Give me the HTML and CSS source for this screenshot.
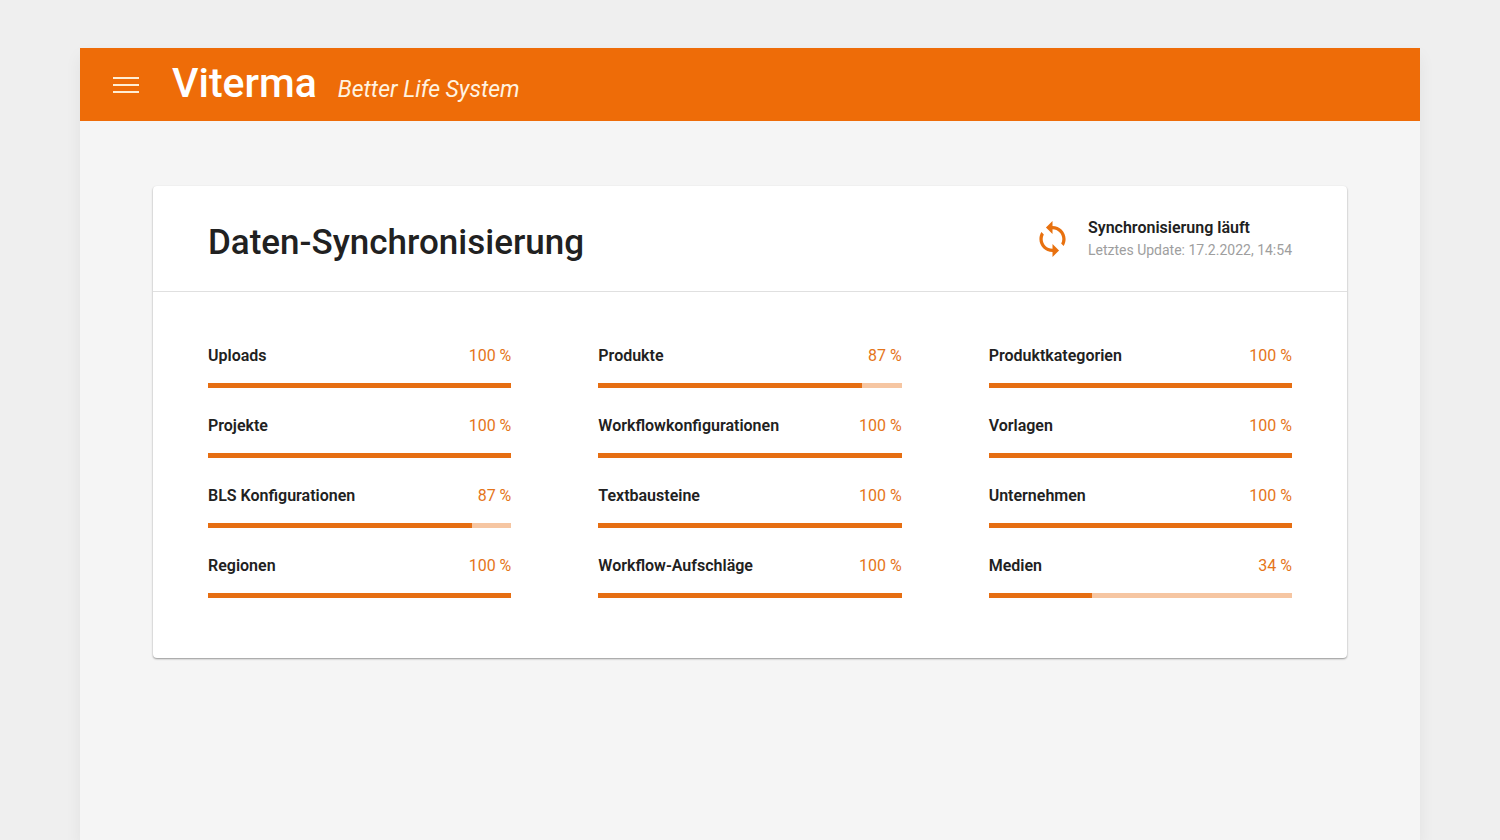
FILE: index.html
```
<!DOCTYPE html>
<html lang="de">
<head>
    <meta charset="UTF-8">
    <meta name="viewport" content="width=device-width, initial-scale=1.0">
    <title>Viterma - Daten-Synchronisierung</title>
    <link rel="stylesheet" href="styles.css">
</head>
<body>
    <div class="window">
        <header class="topbar">
            <button class="menu" type="button" aria-label="Menü">
                <span></span>
                <span></span>
                <span></span>
            </button>
            <div class="brand">Viterma</div>
            <div class="slogan">Better Life System</div>
        </header>

        <main class="content">
            <section class="card">
                <div class="card-head">
                    <h1>Daten-Synchronisierung</h1>
                    <div class="status">
                        <svg class="sync" viewBox="4 1 16 22" aria-hidden="true">
                            <path d="M12 4V1L8 5l4 4V6c3.31 0 6 2.69 6 6 0 1.01-.25 1.97-.7 2.8l1.46 1.46C19.54 15.03 20 13.57 20 12c0-4.42-3.58-8-8-8zm0 14c-3.31 0-6-2.69-6-6 0-1.01.25-1.97.7-2.8L5.24 7.74C4.46 8.97 4 10.43 4 12c0 4.42 3.58 8 8 8v3l4-4-4-4v3z"/>
                        </svg>
                        <div>
                            <div class="status-title">Synchronisierung läuft</div>
                            <div class="status-time">Letztes Update: 17.2.2022, 14:54</div>
                        </div>
                    </div>
                </div>

                <div class="items">
                    <div class="item">
                        <label for="uploads">Uploads</label><span>100 %</span>
                        <progress id="uploads" max="100" value="100"></progress>
                    </div>
                    <div class="item">
                        <label for="produkte">Produkte</label><span>87 %</span>
                        <progress id="produkte" max="100" value="87"></progress>
                    </div>
                    <div class="item">
                        <label for="kategorien">Produktkategorien</label><span>100 %</span>
                        <progress id="kategorien" max="100" value="100"></progress>
                    </div>
                    <div class="item">
                        <label for="projekte">Projekte</label><span>100 %</span>
                        <progress id="projekte" max="100" value="100"></progress>
                    </div>
                    <div class="item">
                        <label for="workflow">Workflowkonfigurationen</label><span>100 %</span>
                        <progress id="workflow" max="100" value="100"></progress>
                    </div>
                    <div class="item">
                        <label for="vorlagen">Vorlagen</label><span>100 %</span>
                        <progress id="vorlagen" max="100" value="100"></progress>
                    </div>
                    <div class="item">
                        <label for="bls">BLS Konfigurationen</label><span>87 %</span>
                        <progress id="bls" max="100" value="87"></progress>
                    </div>
                    <div class="item">
                        <label for="text">Textbausteine</label><span>100 %</span>
                        <progress id="text" max="100" value="100"></progress>
                    </div>
                    <div class="item">
                        <label for="unternehmen">Unternehmen</label><span>100 %</span>
                        <progress id="unternehmen" max="100" value="100"></progress>
                    </div>
                    <div class="item">
                        <label for="regionen">Regionen</label><span>100 %</span>
                        <progress id="regionen" max="100" value="100"></progress>
                    </div>
                    <div class="item">
                        <label for="aufschlag">Workflow-Aufschläge</label><span>100 %</span>
                        <progress id="aufschlag" max="100" value="100"></progress>
                    </div>
                    <div class="item">
                        <label for="medien">Medien</label><span>34 %</span>
                        <progress id="medien" max="100" value="34"></progress>
                    </div>
                </div>
            </section>
        </main>
    </div>
</body>
</html>
```
FILE: styles.css
```
* {
    box-sizing: border-box;
}
body {
    margin: 0;
    min-height: 100vh;
    padding: 48px 80px 0;
    display: flex;
    background: #efefef;
    color: #212121;
    font-family: Roboto, "Liberation Sans", sans-serif;
}
.window {
    flex: 1;
    background: #f5f5f5;
    box-shadow: 0 8px 16px rgba(0, 0, 0, .06);
}

/* header */
.topbar {
    display: flex;
    align-items: baseline;
    height: 73px;
    padding: 11px 33px 10px;
    background: #ee6c08;
    color: #fff;
}
.menu {
    display: flex;
    flex-direction: column;
    align-self: center;
    gap: 5px;
    width: 26px;
    margin-right: 33px;
    padding: 0;
    border: 0;
    background: none;
    cursor: pointer;
}
.menu span {
    width: 100%;
    height: 2px;
    background: #ffeed5;
}
.brand {
    margin-right: 21px;
    font-size: 41px;
    font-weight: 500;
    line-height: 48px;
}
.slogan {
    color: #fff3e0;
    font-size: 23px;
    font-style: italic;
}

.content {
    padding: 65px 73px;
}
.card {
    background: #fff;
    border-radius: 4px;
    box-shadow: 0 1px 2px rgba(0, 0, 0, .4);
}
.card-head {
    display: flex;
    align-items: center;
    justify-content: space-between;
    height: 106px;
    padding: 0 55px;
    border-bottom: 1px solid #e0e0e0;
}
h1 {
    margin: 0;
    padding-top: 8px;
    font-size: 35px;
    font-weight: 500;
}
.status {
    display: flex;
    align-items: center;
    gap: 22px;
}
.sync {
    width: 27px;
    height: 36px;
    fill: #e8710f;
}
.status-title {
    font-size: 16px;
    font-weight: 600;
    line-height: 22px;
}
.status-time {
    color: #9e9e9e;
    font-size: 14px;
    line-height: 22px;
}

/* progress list */
.items {
    display: grid;
    grid-template-columns: repeat(3, 1fr);
    gap: 27px 87px;
    padding: 53px 55px 60px;
}
.item {
    display: flex;
    flex-wrap: wrap;
    justify-content: space-between;
    row-gap: 16px;
    font-size: 16px;
    line-height: 22px;
}
.item label {
    font-weight: 600;
}
.item span {
    color: #e5751a;
}
.item progress {
    appearance: none;
    width: 100%;
    height: 5px;
    border: 0;
    background: #f6c6a2;
}
.item progress::-webkit-progress-bar {
    background: #f6c6a2;
}
.item progress::-webkit-progress-value {
    background: #e66e12;
}
```
